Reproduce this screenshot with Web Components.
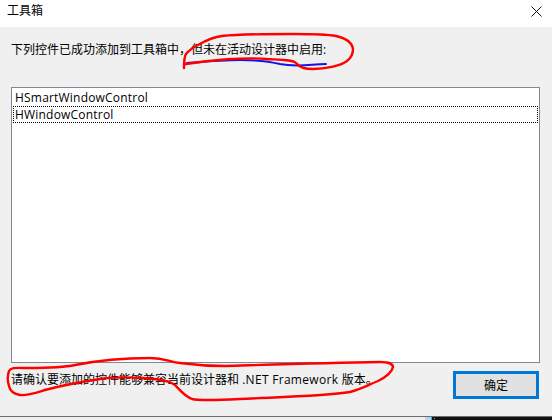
<!DOCTYPE html>
<html lang="zh"><head><meta charset="utf-8"><title>工具箱</title>
<style>html,body{margin:0;padding:0;width:552px;height:420px;overflow:hidden;background:#f0f0f0}</style>
</head><body>
<tool-dialog heading="工具箱">
  <span slot="intro">下列控件已成功添加到工具箱中，但未在活动设计器中启用:</span>
  <list-box slot="list"><list-item>HSmartWindowControl</list-item><list-item focused>HWindowControl</list-item></list-box>
  <span slot="note">请确认要添加的控件能够兼容当前设计器和 <span style="letter-spacing:.3px">.NET Framework </span>版本。</span>
  <win-button slot="action">确定</win-button>
</tool-dialog>
<task-strip></task-strip>
<ink-marks></ink-marks>
<script>
const FONT='"Open Sans","Noto Sans CJK SC",sans-serif';
function def(name,html,extra){
  customElements.define(name,class extends HTMLElement{
    constructor(){super();this.attachShadow({mode:'open'}).innerHTML=html;}
    connectedCallback(){if(extra)extra(this);}
  });
}
def('tool-dialog',`<style>
:host{display:flex;flex-direction:column;width:552px;height:417px;background:#f0f0f0;color:#000;font:12px/16px ${FONT};box-sizing:border-box}
header{height:27px;flex:none;background:#fff;display:flex;align-items:flex-start;justify-content:space-between;padding:3px 10px 0 7px;box-sizing:border-box;font-size:12px}
svg{display:block;margin-top:3px}
main{flex:1;display:flex;flex-direction:column;padding:15px 12px 0 11px;min-height:0}
.intro{height:16px;margin-bottom:29px;white-space:nowrap}
.list{height:276px;flex:none}
.foot{display:flex;justify-content:space-between;align-items:flex-start;padding-top:8px}
.note{white-space:nowrap;padding-top:1px}
.line{height:1px;background:#6d6d6d;flex:none;margin-top:auto}
</style>
<header><span id="t"></span><svg width="11" height="11" viewBox="0 0 11 11"><path d="M.5.5l10 10M10.5.5l-10 10" stroke="#111" fill="none"/></svg></header>
<main><div class="intro"><slot name="intro"></slot></div><div class="list"><slot name="list"></slot></div>
<div class="foot"><div class="note"><slot name="note"></slot></div><slot name="action"></slot></div></main><div class="line"></div>`,
el=>{el.shadowRoot.getElementById('t').textContent=el.getAttribute('heading');});
def('list-box',`<style>:host{display:block;height:100%;box-sizing:border-box;border:1px solid #828790;background:#fff;padding:1px}</style><slot></slot>`);
def('list-item',`<style>:host{display:block;height:17px;box-sizing:border-box;line-height:15px;padding:0 1px 0 1px;border:1px solid transparent;white-space:nowrap;font-size:12px;letter-spacing:.2px}
:host([focused]){border:1px dotted #000}</style><slot></slot>`);
def('win-button',`<style>:host{display:flex;align-items:center;justify-content:center;width:86px;height:28px;margin-right:1px;box-sizing:border-box;border:3px solid #0078d7;background:#e1e1e1;font-size:12px;padding-top:1px;flex:none}</style><slot></slot>`);
def('task-strip',`<style>:host{display:flex;height:3px;background:#f0f0f0;justify-content:flex-end}
.a{width:6px;background:#b9d1ea}.b{width:1px;background:#19b4f0}.c{width:120px;background:#111;display:flex;align-items:center;padding-left:2px;box-sizing:border-box}
.c i{display:block;width:1px;height:1px;background:#999}
</style><div class="a"></div><div class="b"></div><div class="c"><i></i></div>`);
def('ink-marks',`<style>:host{position:absolute;left:0;top:0;width:552px;height:420px;pointer-events:none}svg{display:block}</style>
<svg width="552" height="420" viewBox="0 0 552 420" fill="none" stroke-linecap="round" stroke-linejoin="round">
<path d="M187 63C200 62 225 60 240 60C255 60 268 61 280 64C295 67 305 65 326 64" stroke="#1414e6" stroke-width="2"/>
<path d="M184 68C184 62 184 57 186 54C190 49 194 47 198 45C205 41 212 37 222 36C240 34 270 34 293 34C310 34 325 34 336 36C345 38 352 42 353 49C353 54 351 58 347 61C340 66 325 69 313 69C305 69 300 68 296 63C293 60 285 60 267 59C245 57 210 60 186 64" stroke="#f00" stroke-width="2.4"/>
<path d="M20 395C14 394 10 391 9 386C7 380 8 374 9 371C11 367 17 368 28 368C45 368 62 368 75 365C95 361 125 358 150 358C165 358 170 362 180 363C195 365 205 366 225 366C260 365 320 363 380 362C388 362 393 364 393 367C392 372 386 377 378 381C368 385 362 389 350 392C325 396 280 397 240 399C220 400 200 401 192 399C184 396 180 390 175 385C170 381 160 379 143 378C125 377 112 377 100 379C80 382 60 386 45 390C35 393 26 396 20 395Z" stroke="#f00" stroke-width="2.4"/>
</svg>`);
</script>
</body></html>
